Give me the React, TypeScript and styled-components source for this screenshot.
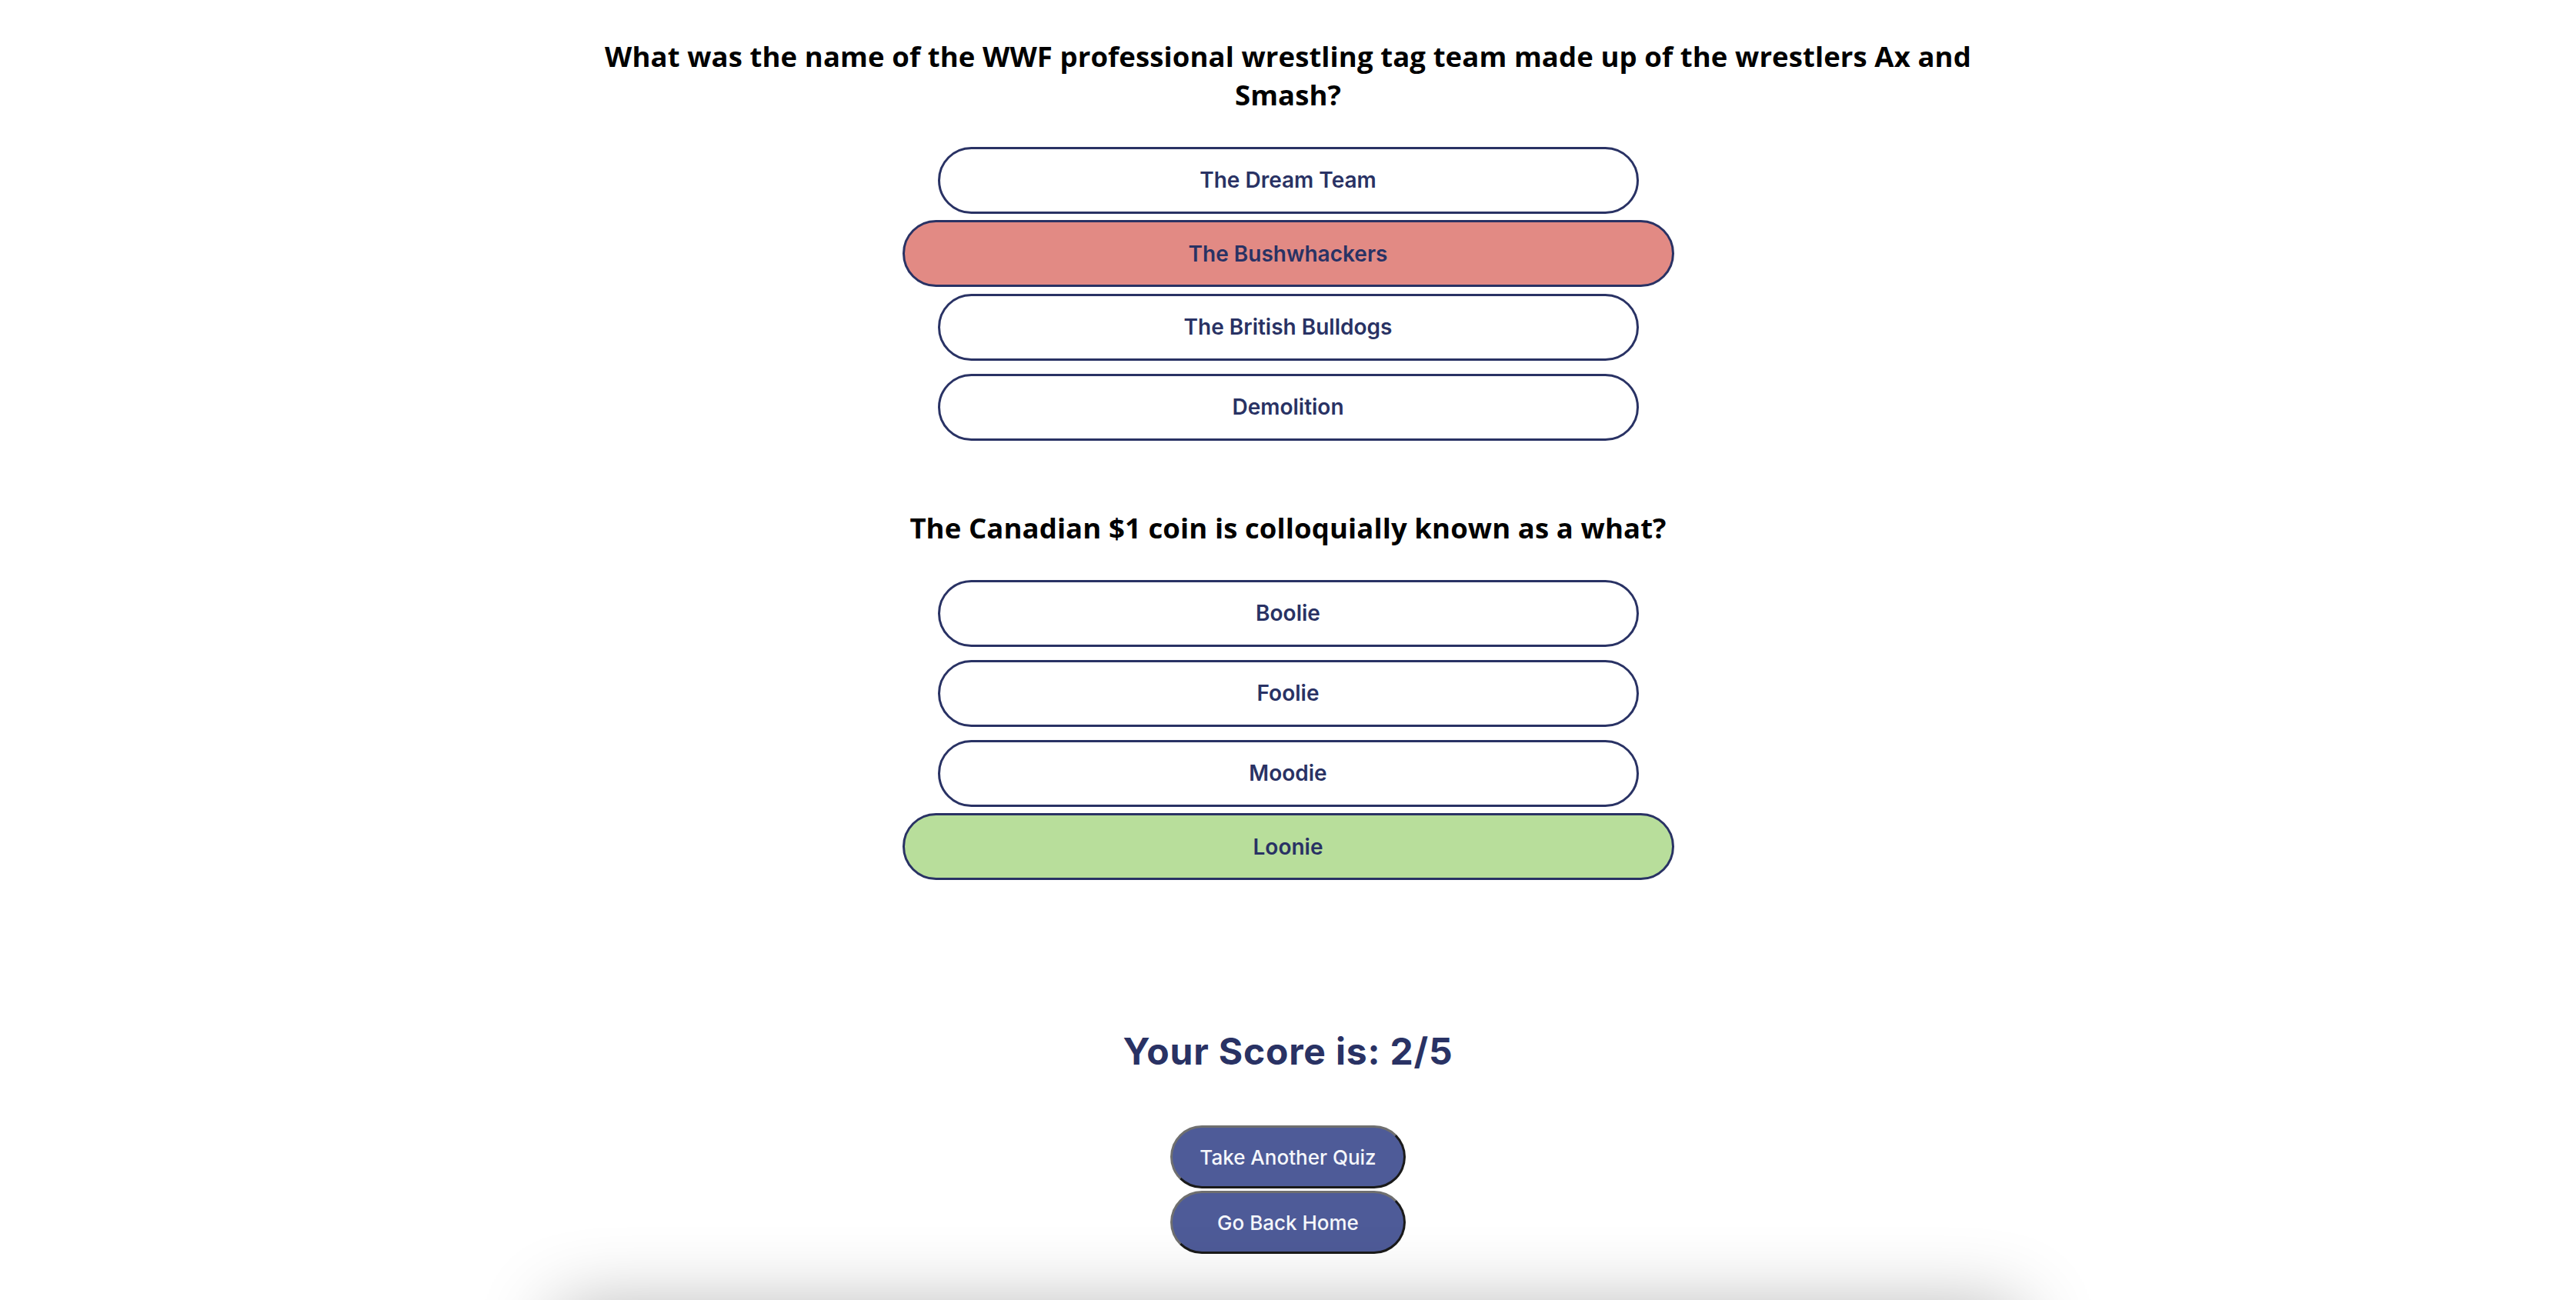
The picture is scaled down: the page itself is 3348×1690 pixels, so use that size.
import React from "react"
import styled, { createGlobalStyle } from "styled-components"

type Answer = {
  text: string
  status?: "wrong" | "correct"
}

type Question = {
  question: string
  answers: Answer[]
}

const questions: Question[] = [
  {
    question:
      "What was the name of the WWF professional wrestling tag team made up of the wrestlers Ax and Smash?",
    answers: [
      { text: "The Dream Team" },
      { text: "The Bushwhackers", status: "wrong" },
      { text: "The British Bulldogs" },
      { text: "Demolition" },
    ],
  },
  {
    question: "The Canadian $1 coin is colloquially known as a what?",
    answers: [
      { text: "Boolie" },
      { text: "Foolie" },
      { text: "Moodie" },
      { text: "Loonie", status: "correct" },
    ],
  },
]

const GlobalStyle = createGlobalStyle`
  body {
    margin: 0;
    background: #ffffff;
    font-family: "Open Sans", sans-serif;
  }
`

export default function App() {
  return (
    <>
      <GlobalStyle />
      <Page>
        {questions.map((q) => (
          <QuestionBlock key={q.question}>
            <QuestionTitle>{q.question}</QuestionTitle>
            <AnswerList>
              {q.answers.map((a) => (
                <AnswerButton key={a.text} $status={a.status}>
                  {a.text}
                </AnswerButton>
              ))}
            </AnswerList>
          </QuestionBlock>
        ))}
        <Score>Your Score is: 2/5</Score>
        <Actions>
          <ActionButton>Take Another Quiz</ActionButton>
          <ActionButton>Go Back Home</ActionButton>
        </Actions>
        <Footer />
      </Page>
    </>
  )
}

const Page = styled.main`
  display: flex;
  flex-direction: column;
  align-items: center;
  padding-top: 48px;
  overflow: hidden;
`

const QuestionBlock = styled.section`
  display: flex;
  flex-direction: column;
  align-items: center;
  width: 1800px;
  margin-bottom: 80px;

  &:last-of-type {
    margin-bottom: 0;
  }
`

const QuestionTitle = styled.h2`
  margin: 0;
  max-width: 1800px;
  font-family: "Open Sans", sans-serif;
  font-weight: 700;
  font-size: 36.5px;
  letter-spacing: 0.1px;
  line-height: 50px;
  text-align: center;
  color: #000000;
`

const AnswerList = styled.div`
  display: flex;
  flex-direction: column;
  align-items: center;
  margin-top: 34px;
`

const AnswerButton = styled.button<{ $status?: "wrong" | "correct" }>`
  box-sizing: border-box;
  width: ${({ $status }) => ($status ? "1003px" : "911px")};
  height: 87px;
  margin: ${({ $status }) => ($status ? "0" : "8.5px 0")};
  border: 3px solid #293264;
  border-radius: 44px;
  background: ${({ $status }) =>
    $status === "wrong" ? "#e28a84" : $status === "correct" ? "#b8de9b" : "#ffffff"};
  font-family: Inter, sans-serif;
  font-weight: 600;
  font-size: 28px;
  color: #293264;
  cursor: pointer;
`

const Score = styled.h1`
  margin: 194px 0 0;
  font-family: Inter, sans-serif;
  font-weight: 700;
  font-size: 48px;
  letter-spacing: 0.8px;
  line-height: 57px;
  color: #293264;
`

const Actions = styled.div`
  display: flex;
  flex-direction: column;
  align-items: center;
  gap: 3px;
  margin-top: 68px;
`

const ActionButton = styled.button`
  box-sizing: border-box;
  width: 306px;
  height: 82px;
  border: 3px outset #6f6f6f;
  border-radius: 41px;
  background: #4e5b98;
  font-family: Inter, sans-serif;
  font-weight: 500;
  font-size: 26px;
  color: #f5f7fb;
  cursor: pointer;
`

const Footer = styled.footer`
  width: 1900px;
  height: 200px;
  margin: 70px 0 150px;
  box-shadow: 0 0 100px rgba(0, 0, 0, 0.3);
  background: #ffffff;
`
